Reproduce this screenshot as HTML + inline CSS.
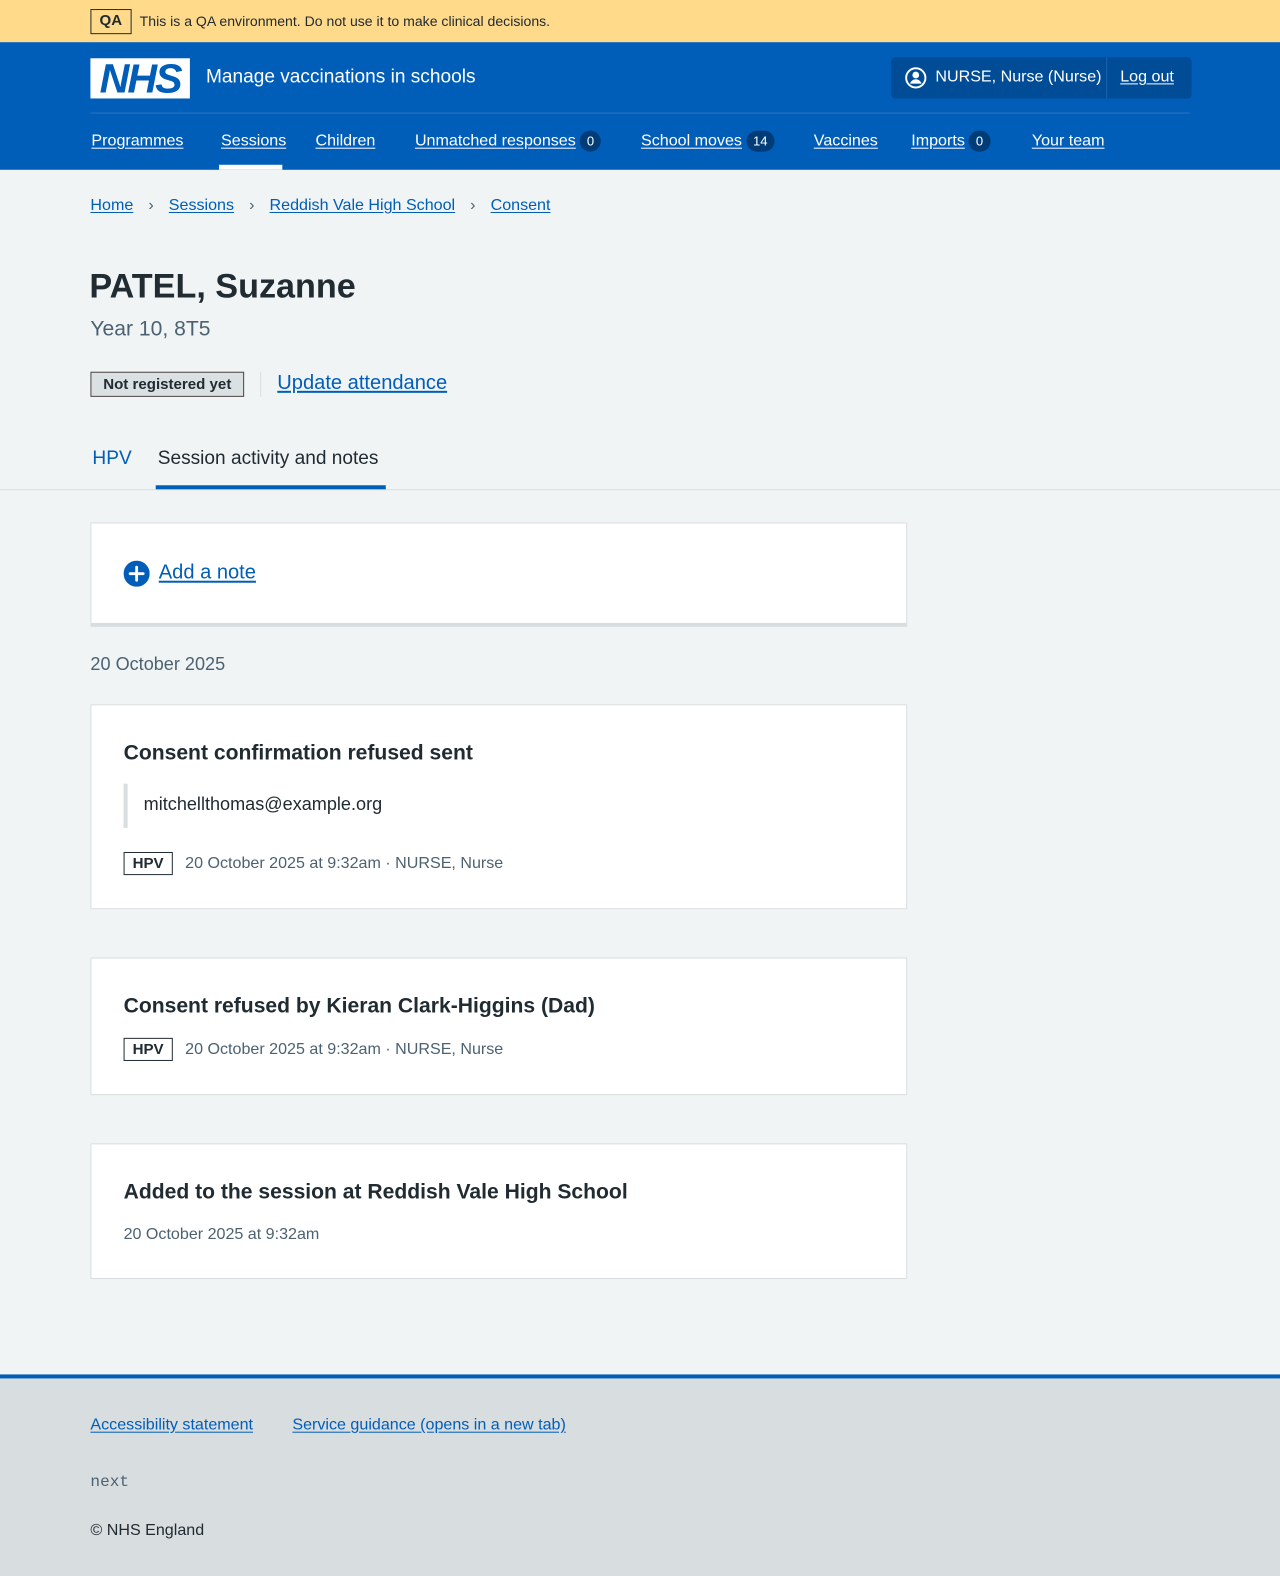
<!DOCTYPE html>
<html><head><meta charset="utf-8"><style>
*{margin:0;padding:0;box-sizing:border-box}
html,body{width:1280px;height:1576px;overflow:hidden}
body{background:#f0f4f5;font-family:"Liberation Sans",Arial,sans-serif;color:#212b32;position:relative}
#w{position:absolute;left:0;top:0;width:1274px;height:1569px;transform:scale(1.0047);transform-origin:0 0}
.a{position:absolute;white-space:nowrap}
a{color:#005eb8;text-decoration:underline;text-underline-offset:2px}
.nav a{color:#fff;font-size:16px}
.cnt{display:inline-block;background:#003d78;color:#fff;border-radius:12px;font-size:13px;padding:3px 7px;margin-left:4px;text-decoration:none;vertical-align:middle}
.card{position:absolute;left:90px;width:813px;background:#fff;border:1px solid #d8dde0}
.tag{display:inline-block;border:1px solid #212b32;font-weight:bold;font-size:15px;padding:2px 8px;color:#212b32;background:#fff}
.meta{color:#4c6272;font-size:16px}
h3{font-size:21px;font-weight:bold;position:absolute;left:32px}
</style></head><body><div id="w">
<div class="a" style="left:0;top:0;width:1280px;height:42px;background:#ffda8a"></div>
<div class="a" style="left:90px;top:9px;border:1px solid #212b32;font-weight:bold;font-size:15px;padding:2px 8px;height:25px">QA</div>
<div class="a" style="left:139px;top:13px;font-size:14px;color:#212b32">This is a QA environment. Do not use it to make clinical decisions.</div>
<div class="a" style="left:0;top:42px;width:1280px;height:127px;background:#005eb8"></div>
<div class="a" style="left:90px;top:58px;width:99px;height:40px;background:#fff;color:#005eb8;font-weight:bold;font-style:italic;font-size:41px;line-height:40px;text-align:center;letter-spacing:-2px">NHS</div>
<div class="a" style="left:205px;top:66px;color:#fff;font-size:19px">Manage vaccinations in schools</div>
<div class="a" style="left:887px;top:57px;width:299px;height:41px;background:#004c97;border-radius:4px"></div>
<div class="a" style="left:1101px;top:57px;width:1px;height:41px;background:#1b63ad"></div>
<svg class="a" style="left:900px;top:66px" width="23" height="23" viewBox="0 0 24 24"><circle cx="12" cy="12" r="10" fill="none" stroke="#fff" stroke-width="2"/><circle cx="12" cy="9" r="3.5" fill="#fff"/><path d="M6 18c1-3 3.5-4.5 6-4.5s5 1.5 6 4.5" fill="#fff"/></svg>
<div class="a" style="left:931px;top:68px;color:#fff;font-size:16px">NURSE, Nurse (Nurse)</div>
<div class="a" style="left:1115px;top:68px;font-size:16px"><a style="color:#fff">Log out</a></div>
<div class="a" style="left:90px;top:112px;width:1094px;height:1px;background:#2f74c0"></div>
<div class="a nav" style="left:91px;top:132px"><a>Programmes</a></div>
<div class="a nav" style="left:220px;top:132px"><a>Sessions</a></div>
<div class="a" style="left:218px;top:164px;width:63px;height:5px;background:#fff"></div>
<div class="a nav" style="left:314px;top:132px"><a>Children</a></div>
<div class="a nav" style="left:413px;top:130px"><a>Unmatched responses</a><span class="cnt">0</span></div>
<div class="a nav" style="left:638px;top:130px"><a>School moves</a><span class="cnt">14</span></div>
<div class="a nav" style="left:810px;top:132px"><a>Vaccines</a></div>
<div class="a nav" style="left:907px;top:130px"><a>Imports</a><span class="cnt">0</span></div>
<div class="a nav" style="left:1027px;top:132px"><a>Your team</a></div>
<div class="a" style="left:90px;top:196px;font-size:16px"><a>Home</a><span style="color:#4c6272;margin:0 15px">›</span><a>Sessions</a><span style="color:#4c6272;margin:0 15px">›</span><a>Reddish Vale High School</a><span style="color:#4c6272;margin:0 15px">›</span><a>Consent</a></div>
<div class="a" style="left:89px;top:266px;font-size:34px;font-weight:bold">PATEL, Suzanne</div>
<div class="a" style="left:90px;top:316px;font-size:21px;color:#4c6272">Year 10, 8T5</div>
<div class="a" style="left:90px;top:370px;width:153px;height:25px;border:1px solid #4c4545;background:#dbe0e3;color:#212b32;font-weight:bold;font-size:15px;text-align:center;line-height:23px">Not registered yet</div>
<div class="a" style="left:259px;top:370px;width:1px;height:25px;background:#d8dde0"></div>
<div class="a" style="left:276px;top:370px;font-size:20px"><a>Update attendance</a></div>
<div class="a" style="left:92px;top:446px;font-size:19px;color:#005eb8">HPV</div>
<div class="a" style="left:157px;top:446px;font-size:19px">Session activity and notes</div>
<div class="a" style="left:0;top:487px;width:1280px;height:1px;background:#d8dde0"></div>
<div class="a" style="left:155px;top:483px;width:229px;height:4px;background:#005eb8"></div>
<div class="card" style="top:520px;height:104px;border-bottom:4px solid #d8dde0">
<svg class="a" style="left:32px;top:37px" width="26" height="26" viewBox="0 0 24 24"><circle cx="12" cy="12" r="12" fill="#005eb8"/><path d="M12 6v12M6 12h12" stroke="#fff" stroke-width="2.6" stroke-linecap="round"/></svg>
<div class="a" style="left:67px;top:38px;font-size:20px"><a>Add a note</a></div></div>
<div class="a" style="left:90px;top:651px;font-size:18px;color:#4c6272">20 October 2025</div>
<div class="card" style="top:701px;height:204px">
<h3 style="top:36px">Consent confirmation refused sent</h3>
<div class="a" style="left:32px;top:78px;width:4px;height:44px;background:#d8dde0"></div>
<div class="a" style="left:52px;top:88px;font-size:18px">mitchellthomas@example.org</div>
<div class="a" style="left:32px;top:146px"><span class="tag">HPV</span> <span class="meta" style="margin-left:8px">20 October 2025 at 9:32am · NURSE, Nurse</span></div></div>
<div class="card" style="top:953px;height:137px">
<h3 style="top:36px">Consent refused by Kieran Clark-Higgins (Dad)</h3>
<div class="a" style="left:32px;top:79px"><span class="tag">HPV</span> <span class="meta" style="margin-left:8px">20 October 2025 at 9:32am · NURSE, Nurse</span></div></div>
<div class="card" style="top:1138px;height:135px">
<h3 style="top:36px">Added to the session at Reddish Vale High School</h3>
<div class="a meta" style="left:32px;top:81px">20 October 2025 at 9:32am</div></div>
<div class="a" style="left:0;top:1368px;width:1280px;height:210px;background:#d8dde0;border-top:4px solid #005eb8"></div>
<div class="a" style="left:90px;top:1410px;font-size:16px"><a>Accessibility statement</a></div>
<div class="a" style="left:291px;top:1410px;font-size:16px"><a>Service guidance (opens in a new tab)</a></div>
<div class="a" style="left:90px;top:1466px;font-size:16px;font-family:'Liberation Mono',monospace;color:#4c6272">next</div>
<div class="a" style="left:90px;top:1515px;font-size:16px">© NHS England</div>
</div></body></html>
